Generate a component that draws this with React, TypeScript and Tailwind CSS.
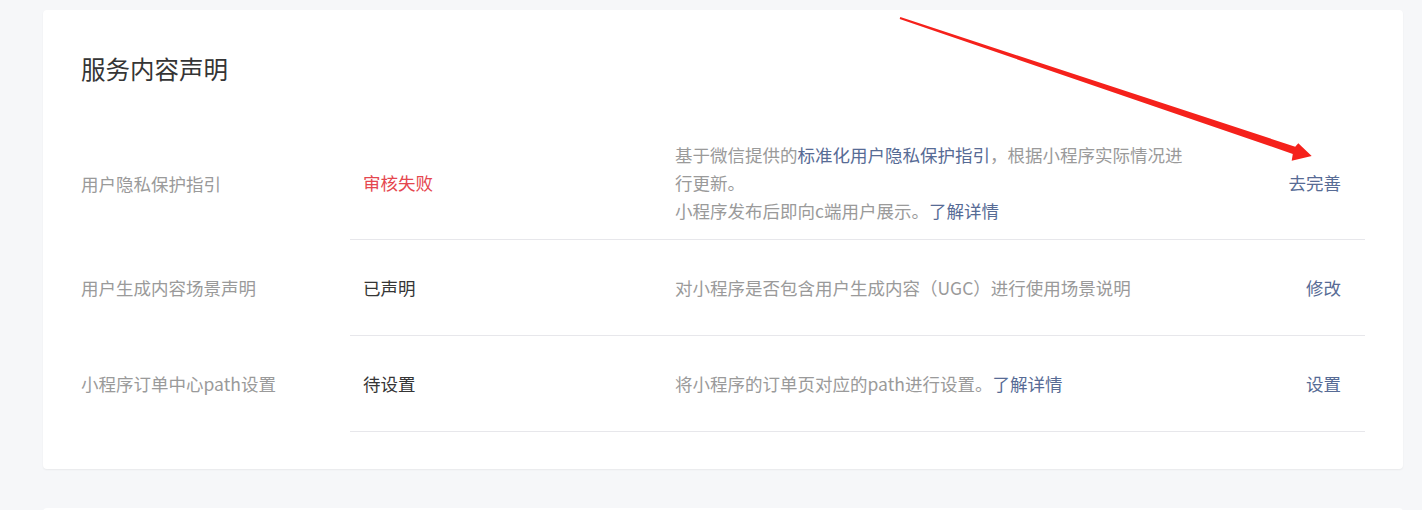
const rows = [
  {
    label: "用户隐私保护指引",
    status: "审核失败",
    statusColor: "text-[#e5474f]",
    action: "去完善",
    desc: (
      <>
        基于微信提供的<span className="text-[#576b95]">标准化用户隐私保护指引</span>，根据小程序实际情况进行更新。
        <br />
        小程序发布后即向c端用户展示。<span className="text-[#576b95]">了解详情</span>
      </>
    ),
  },
  {
    label: "用户生成内容场景声明",
    status: "已声明",
    statusColor: "text-[#353535]",
    action: "修改",
    desc: <>对小程序是否包含用户生成内容（UGC）进行使用场景说明</>,
  },
  {
    label: "小程序订单中心path设置",
    status: "待设置",
    statusColor: "text-[#353535]",
    action: "设置",
    desc: (
      <>
        将小程序的订单页对应的path进行设置。<span className="text-[#576b95]">了解详情</span>
      </>
    ),
  },
];

export default function App() {
  return (
    <div
      className="relative h-[510px] bg-[#f6f7f9] pt-[10px] pl-[43px] pr-[19px] overflow-hidden"
      style={{ fontFamily: '"Noto Sans CJK SC", "Noto Sans", sans-serif' }}
    >
      <div className="bg-white rounded-[4px] shadow-[0_1px_2px_rgba(0,0,0,0.06)] px-[38px] pt-[38px] pb-[37px]">
        <h2 className="text-[24.5px] leading-[42px] text-[#353535] mb-[37px]">服务内容声明</h2>
        <div>
          {rows.map((r) => (
            <div key={r.label} className="flex text-[17.5px] leading-[28px]">
              <div className="w-[269px] shrink-0 flex items-center text-[#9a9a9a]">{r.label}</div>
              <div className="flex-1 flex items-center min-h-[96px] py-[14px] border-b border-[#e7e7eb]">
                <div className={`w-[325px] shrink-0 pl-[13px] ${r.statusColor}`}>{r.status}</div>
                <div className="w-[515px] shrink-0 text-[#9a9a9a]">{r.desc}</div>
                <div className="flex-1 text-right pr-[24px] text-[#576b95]">{r.action}</div>
              </div>
            </div>
          ))}
        </div>
      </div>
      <div className="bg-white rounded-[4px] mt-[39px] h-[10px]" />
      <svg className="absolute left-0 top-0 pointer-events-none" width="1422" height="510">
        <polygon
          points="900.3,17 1295.2,146.7 1298.3,143.3 1311.7,156 1291.7,160.7 1292.8,153.9 899.7,19"
          fill="#f5211b"
          strokeLinejoin="round"
        />
      </svg>
    </div>
  );
}
